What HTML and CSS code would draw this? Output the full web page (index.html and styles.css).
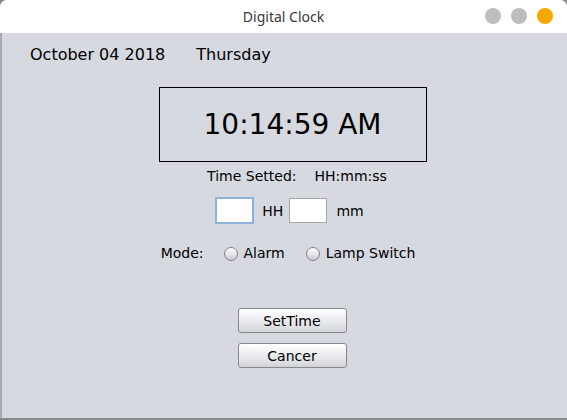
FILE: index.html
```html
<!DOCTYPE html>
<html>
<head>
<meta charset="utf-8">
<link rel="stylesheet" href="styles.css">
</head>
<body>
<div class="window">
  <div class="titlebar">
    <span class="title">Digital Clock</span>
    <div class="controls">
      <span class="dot"></span>
      <span class="dot"></span>
      <span class="dot active"></span>
    </div>
  </div>
  <div class="content">
    <div class="date-row">
      <span class="date">October 04 2018</span>
      <span class="day">Thursday</span>
    </div>
    <div class="center">
      <div class="clock">10:14:59 AM</div>
      <div class="setted"><span>Time Setted:</span><span class="fmt">HH:mm:ss</span></div>
      <div class="inputs">
        <input class="field focused" type="text">
        <span class="unit">HH</span>
        <input class="field" type="text">
        <span class="unit mm">mm</span>
      </div>
      <div class="mode">
        <span class="mode-label">Mode:</span>
        <span class="radio"></span><span>Alarm</span>
        <span class="radio second"></span><span>Lamp Switch</span>
      </div>
      <div class="buttons">
        <button class="btn">SetTime</button>
        <button class="btn">Cancer</button>
      </div>
    </div>
  </div>
</div>
</body>
</html>
```

FILE: styles.css
```css
html, body {
  margin: 0;
  padding: 0;
  width: 567px;
  height: 420px;
  overflow: hidden;
  background: #8a8a8a;
}
.window {
  width: 567px;
  height: 418px;
  display: flex;
  flex-direction: column;
  border-radius: 7px 7px 0 0;
  overflow: hidden;
  background: #d6d9e0;
  font-family: "DejaVu Sans", sans-serif;
  color: #000;
}
.titlebar {
  height: 33px;
  flex: none;
  background: #ffffff;
  position: relative;
  display: flex;
  align-items: center;
  justify-content: center;
}
.title {
  font-family: "Noto Sans", sans-serif;
  font-size: 14px;
  color: #3a3a3a;
  margin-left: 0;
}
.controls {
  position: absolute;
  right: 14px;
  top: 8px;
  display: flex;
  gap: 10px;
}
.dot {
  width: 16px;
  height: 16px;
  border-radius: 50%;
  background: #bdbdbd;
}
.dot.active {
  background: #f7a700;
}
.content {
  flex: 1;
  border-left: 2px solid #a9abb0;
  padding-top: 12px;
}
.date-row {
  font-size: 16px;
  line-height: 19px;
  padding-left: 28px;
  display: flex;
  gap: 31px;
}
.center {
  display: flex;
  flex-direction: column;
  align-items: center;
  padding-left: 16px;
}
.clock {
  margin-top: 23px;
  width: 266px;
  height: 73px;
  border: 1px solid #000;
  display: flex;
  align-items: center;
  justify-content: center;
  font-size: 28px;
  box-sizing: content-box;
}
.setted {
  margin-top: 6px;
  font-size: 14px;
  line-height: 17px;
  display: flex;
  gap: 18px;
  margin-left: 9px;
}
.inputs {
  margin-top: 12px;
  display: flex;
  align-items: center;
  font-size: 14px;
  margin-left: 0;
}
.field {
  width: 38px;
  height: 25px;
  box-sizing: border-box;
  border: 1px solid #a5a7ab;
  background: #fff;
  margin: 0;
  padding: 0;
  outline: none;
}
.field.focused {
  width: 39px;
  height: 27px;
  border: 2px solid #8fb2da;
}
.unit {
  margin: 0 6px 0 8px;
}
.unit.mm {
  margin-left: 9px;
}
.mode {
  margin-top: 21px;
  display: flex;
  align-items: center;
  font-size: 14px;
  line-height: 17px;
  margin-left: -9px;
}
.mode-label {
  margin-right: 20px;
}
.radio {
  width: 12px;
  height: 12px;
  border-radius: 50%;
  border: 1px solid #7d7f84;
  background: linear-gradient(#ffffff, #c9ccd2);
  margin-right: 6px;
}
.radio.second {
  margin-left: 21px;
}
.buttons {
  margin-top: 46px;
  display: flex;
  flex-direction: column;
  gap: 10px;
  margin-left: -1px;
}
.btn {
  width: 109px;
  height: 25px;
  margin: 0;
  padding: 0;
  border: 1px solid #86888d;
  border-radius: 3px;
  background: linear-gradient(#ffffff, #e8eaee 55%, #d2d4d9);
  font-family: "DejaVu Sans", sans-serif;
  font-size: 14px;
  color: #000;
}
```
